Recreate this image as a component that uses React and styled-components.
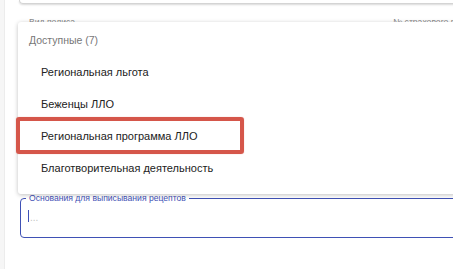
import React from 'react';
import styled, { createGlobalStyle } from 'styled-components';

const GlobalStyle = createGlobalStyle`
  html, body {
    margin: 0;
    padding: 0;
    background: #ffffff;
    font-family: "Liberation Sans", Arial, sans-serif;
    overflow: hidden;
  }
`;

const options = [
  'Региональная льгота',
  'Беженцы ЛЛО',
  'Региональная программа ЛЛО',
  'Благотворительная деятельность',
];

const App = () => {
  return (
    <>
      <GlobalStyle />
      <Page>
        <Sidebar />
        <Main>
          <TopCard />
          <FieldRow>
            <Field $width="357px">
              <Legend>Вид полиса</Legend>
            </Field>
            <Field $grow>
              <Legend>№ страхового полиса</Legend>
            </Field>
          </FieldRow>
          <ReasonField>
            <Legend $active>Основания для выписывания рецептов</Legend>
            <InputLine>
              <Caret />
              <Placeholder>...</Placeholder>
            </InputLine>
          </ReasonField>

          <Menu>
            <MenuHeader>Доступные (7)</MenuHeader>
            {options.map((o) => (
              <MenuItem key={o}>{o}</MenuItem>
            ))}
            <Highlight />
          </Menu>
        </Main>
      </Page>
    </>
  );
};

export default App;

const Page = styled.div`
  width: 453px;
  height: 269px;
  display: flex;
  overflow: hidden;
`;

const Sidebar = styled.div`
  width: 4px;
  flex-shrink: 0;
  background: #f6f6f6;
  border-right: 1px solid #ececec;
`;

const Main = styled.div`
  position: relative;
  flex: 1;
  padding-left: 14px;
  display: flex;
  flex-direction: column;
`;

const TopCard = styled.div`
  height: 3px;
  margin-right: -10px;
  border: 1px solid #d4d4d4;
  border-top: none;
  border-radius: 0 0 5px 5px;
  box-shadow: 0 1px 2px rgba(0, 0, 0, 0.15);
`;

const FieldRow = styled.div`
  display: flex;
  gap: 7px;
  margin-top: 13px;
  margin-left: 1px;
  margin-right: -40px;
`;

const Field = styled.fieldset`
  margin: 0;
  padding: 0 5px;
  height: 40px;
  box-sizing: border-box;
  border: 1px solid #cfcfcf;
  border-radius: 4px;
  width: ${(p) => p.$width || 'auto'};
  flex: ${(p) => (p.$grow ? 1 : 'none')};
  min-width: 0;
`;

const Legend = styled.legend`
  padding: 0 3px;
  font-size: 8.6px;
  line-height: 10px;
  color: ${(p) => (p.$active ? '#3f51b5' : '#8a8a8a')};
  white-space: nowrap;
`;

const ReasonField = styled.fieldset`
  margin: 136px -10px 0 1px;
  padding: 0 5px;
  height: 45px;
  box-sizing: border-box;
  border: 1px solid #3f51b5;
  border-radius: 4px;
`;

const InputLine = styled.div`
  display: flex;
  align-items: center;
  height: 26px;
  padding-left: 2px;
`;

const Caret = styled.span`
  width: 1px;
  height: 12px;
  background: #3f51b5;
`;

const Placeholder = styled.span`
  font-size: 10px;
  line-height: 10px;
  color: #c4c4c4;
  margin-left: 1px;
  margin-top: 3px;
`;

const Menu = styled.div`
  position: absolute;
  top: 22px;
  left: 13px;
  right: -10px;
  height: 172px;
  background: #ffffff;
  border-radius: 3px;
  padding-top: 2px;
  box-sizing: border-box;
  box-shadow: 0 1px 4px rgba(0, 0, 0, 0.25);
`;

const MenuHeader = styled.div`
  height: 32px;
  display: flex;
  align-items: center;
  padding-left: 11px;
  font-size: 10.5px;
  color: #777777;
`;

const MenuItem = styled.div`
  height: 32px;
  display: flex;
  align-items: center;
  padding-left: 23px;
  font-size: 11px;
  color: #222222;
`;

const Highlight = styled.div`
  position: absolute;
  left: -2px;
  top: 95px;
  width: 228px;
  height: 37px;
  box-sizing: border-box;
  border: 4px solid #d5564a;
  border-radius: 3px;
  box-shadow: 0 0 1px rgba(213, 86, 74, 0.6);
  pointer-events: none;
`;
